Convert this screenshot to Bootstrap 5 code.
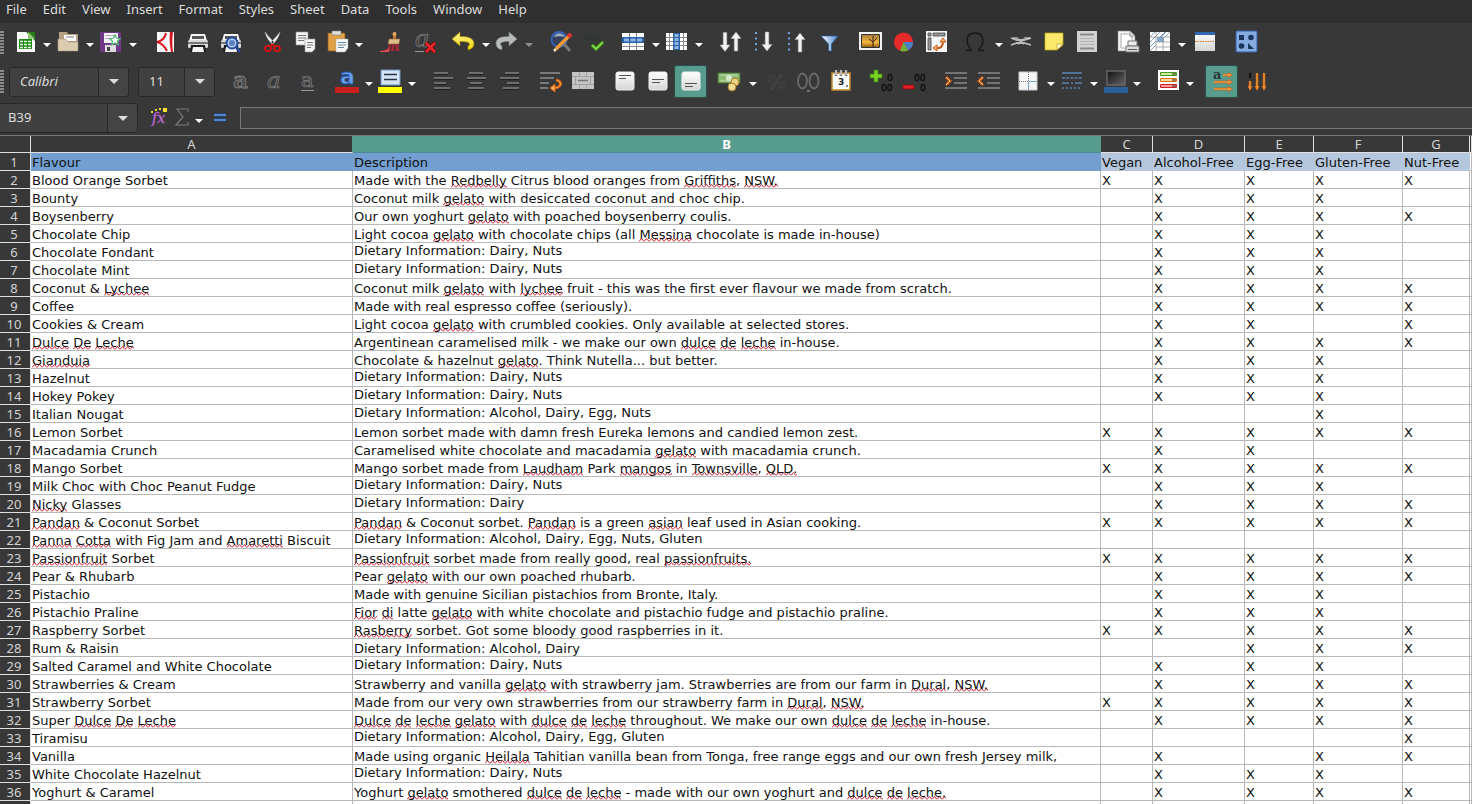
<!DOCTYPE html>
<html lang="en">
<head>
<meta charset="utf-8">
<meta name="viewport" content="width=device-width, initial-scale=1">
<title>Flavours – Calc</title>
<link href="https://cdn.jsdelivr.net/npm/bootstrap@5.3.0/dist/css/bootstrap.min.css" rel="stylesheet">
<style>
:root { --chrome:#383838; --chrome-dark:#2f2f2f; --field:#404040; --edge:#282828; --accent:#589c8d; --ui:"Noto Sans","Open Sans",sans-serif; }
body { background:var(--chrome); color:#dcdcdc; font-family:var(--ui); font-size:13px; }
.menubar { background:var(--chrome-dark); height:23px; padding:0 6px; gap:16px; }
.menubar a { color:#dcdcdc; line-height:19px; text-decoration:none; }
.toolbar { height:39px; padding-left:9px; background-repeat:no-repeat; background-size:4px 24px; background-position:0 center;
  background-image:repeating-linear-gradient(#8a8a8a 0 2px,#383838 2px 3px); }
.tool { width:33px; height:33px; padding:0; border:0; border-radius:3px; display:flex; align-items:center; justify-content:center; flex:none; }
.tool svg { width:24px; height:24px; display:block; overflow:visible; }
.tool.active { background:var(--accent); box-shadow:0 0 0 1px #2c4d46 inset; }
.drop { width:10px; height:33px; padding:5px 0 0; border:0; border-radius:0; display:flex; align-items:center; justify-content:center; flex:none; }
.drop::before, .pick::before { content:""; border:4px solid transparent; border-top-color:#fff; border-bottom:0; }
.drop:disabled { border:0; opacity:.45; }
.pick::before { border-width:5px; border-bottom:0; border-top-color:#dcdcdc; }
.gap-s { width:8px; flex:none; } .gap-m { width:10px; flex:none; }
.combo { height:30px; flex:none; width:auto; flex-wrap:nowrap; }
.combo .form-control { background:var(--field); color:#dcdcdc; border:1px solid var(--edge); border-radius:3px 0 0 3px; font-size:13px; padding:0 10px; min-width:0; flex:1; }
.combo .pick { width:31px; padding:0; background:#444; border:1px solid var(--edge); border-radius:0 3px 3px 0; display:flex; align-items:center; justify-content:center; }
.c-font { width:120px; } .c-size { width:77px; margin:0 9px; } .c-name { width:138px; }
.combo.c-name .form-control { border-left:0; border-radius:0; padding-left:8px; }
.formulabar { height:35px; border-bottom:1px solid #777; }
.formulabar .tool { width:24px; }
.formulabar .tool.equals { margin-left:4px; }
.formula { height:22px; background:var(--field); border:1px solid #777; border-right:0; border-radius:0; color:#dcdcdc; margin-left:8px; padding:0 4px; font-size:13px; min-width:0; }
.workarea { background:#fff; }
.sheet { table-layout:fixed; width:100%; border-collapse:separate; border-spacing:0; margin:0; font-family:"DejaVu Sans",sans-serif; font-size:13px; line-height:15px; }
.sheet td, .sheet th { height:18px; padding:2px 0 0 1px; border:0 solid #b8b8b8; border-width:0 1px 1px 0; color:#111; background:#fff; box-shadow:none; white-space:nowrap; overflow:hidden; vertical-align:top; font-weight:400; }
.sheet thead th, .sheet tbody th { background:var(--chrome); color:#d4d4d4; border-color:#e0e0e0; text-align:center; font-family:var(--ui); }
.sheet tbody th { padding:2px 2px 0 0; }
.sheet thead th { height:17px; padding:0; line-height:16px; }
.sheet thead th.before-current { border-right-color:var(--accent); }
.sheet thead th.current { background:var(--accent); color:#fff; font-weight:700; border-color:var(--accent); border-bottom-color:#4b8a98; }
.sheet td.head-main { background:#729fcf; border-color:#729fcf; }
.sheet td.head-flag { background:#b4c7dc; border-color:#b4c7dc; }
.sheet td.raised { padding-top:0; }
.sheet .typo { background:url("data:image/svg+xml,%3Csvg xmlns='http://www.w3.org/2000/svg' width='5' height='4'%3E%3Cpath d='M0 3.500L2.500 .5L5 3.500' fill='none' stroke='%23d02030'/%3E%3C/svg%3E") left bottom/5px 4px repeat-x; }
.w-row { width:31px; } .w-a { width:322px; } .w-b { width:748px; } .w-c { width:52px; } .w-d { width:92px; } .w-e { width:69px; } .w-f { width:89px; } .w-g { width:67px; }
</style>
</head>
<body class="vh-100 overflow-hidden d-flex flex-column">

<svg width="0" height="0" class="position-absolute" aria-hidden="true">
  <defs>
    <linearGradient id="silver" x1="0" y1="0" x2="0" y2="1"><stop offset="0" stop-color="#fff"/><stop offset="1" stop-color="#d4d4d4"/></linearGradient>
    <linearGradient id="gold" x1="0" y1="0" x2="0" y2="1"><stop offset="0" stop-color="#fff39a"/><stop offset="1" stop-color="#edd400"/></linearGradient>
    <linearGradient id="sky" x1="0" y1="0" x2="1" y2="0"><stop offset="0" stop-color="#fff"/><stop offset="1" stop-color="#4d8bd0"/></linearGradient>
    <linearGradient id="sunset" x1="0" y1="0" x2="0" y2="1"><stop offset="0" stop-color="#a77a3a"/><stop offset=".6" stop-color="#f5b93c"/><stop offset="1" stop-color="#8a5a18"/></linearGradient>
    <linearGradient id="dusk" x1="0" y1="0" x2="1" y2="1"><stop offset="0" stop-color="#111"/><stop offset="1" stop-color="#666"/></linearGradient>
    <g id="arrow-down"><path d="M-1.800 -9h3.600V3.500h3.200L0 10l-5 -6.500h3.200z" fill="#f2f2f2" stroke="#aaa" stroke-width=".5"/></g>
    <g id="printer"><path d="M5 3h14l2 7H3z" fill="#f5f5f5"/><path d="M6 5h12v3H6z" fill="#555"/><rect x="2" y="9" width="20" height="8" rx="1.500" fill="#dadada"/><path d="M2 12h20" stroke="#555" stroke-width="1.500"/><path d="M5 14h14l1 7H4z" fill="#1c1c1c"/><path d="M7 16h10l1 5H6z" fill="#f2f2f2"/></g>
  </defs>
</svg>

<nav class="menubar d-flex flex-shrink-0" aria-label="Main menu">
  <a href="#">File</a><a href="#">Edit</a><a href="#">View</a><a href="#">Insert</a><a href="#">Format</a><a href="#">Styles</a><a href="#">Sheet</a><a href="#">Data</a><a href="#">Tools</a><a href="#">Window</a><a href="#">Help</a>
</nav>

<div class="toolbar d-flex align-items-center flex-shrink-0" role="toolbar" aria-label="Standard">
  <button class="btn tool" aria-label="New"><svg viewBox="0 0 24 24"><path d="M3 1h11l7 7v13H3z" fill="#fafafa"/><path d="M12 1h9v9z" fill="#2c7a1c"/><path d="M14 1v7h7z" fill="#8ecb72"/><rect x="5" y="8" width="13" height="10" fill="#1e8a12"/><path d="M6 10.500h11M6 13.500h11M6 16.500h11" stroke="#e6f6e0" stroke-width="1.600"/><path d="M9.500 9v9M13.500 9v9" stroke="#1e8a12"/></svg></button><button class="btn drop" aria-label="New options"></button>
  <button class="btn tool" aria-label="Open"><svg viewBox="0 0 24 24"><path d="M2 1h8l1 2h10v8H2z" fill="#b5a084"/><path d="M7 4h12v6H7z" fill="#fff"/><path d="M9 6h8" stroke="#777"/><path d="M1 8h8l2 3h10v9H1z" fill="#dccbb0" stroke="#a8937a" stroke-width=".6"/></svg></button><button class="btn drop" aria-label="Open options"></button>
  <button class="btn tool" aria-label="Save"><svg viewBox="0 0 24 24"><rect x="0" y="1" width="21" height="20" rx="1.500" fill="#6f3889"/><rect x="4" y="2" width="14" height="10" fill="#f4f0f6"/><path d="M5 4.500h10M5 7.500h6" stroke="#b9a6c6"/><path d="M5 14h11v7H5z" fill="#ddd"/><path d="M7 16h3v4H7z" fill="#444"/><path d="M15 4l1.600 3.300 3.600.4-2.700 2.500.8 3.600-3.300-1.800-3.300 1.800.8-3.600L9.800 7.700l3.600-.4z" fill="#fff" stroke="#49b868" stroke-width="1.200"/></svg></button><button class="btn drop" aria-label="Save options"></button>
  <span class="gap-m"></span>
  <button class="btn tool" aria-label="Export as PDF"><svg viewBox="0 0 24 24"><path d="M4 1h17v20H4z" fill="#f7f7f7"/><path d="M4 11c5-1 8-4 9-9M4 11c4 1 8 5 10 9" fill="none" stroke="#d8141c" stroke-width="2"/><path d="M17 1h3c-1 7-1 13 0 20h-2c-1-7-2-13-1-20z" fill="#d8141c"/></svg></button>
  <button class="btn tool" aria-label="Print"><svg viewBox="0 0 24 24"><use href="#printer"/></svg></button>
  <button class="btn tool" aria-label="Print preview"><svg viewBox="0 0 24 24"><use href="#printer"/><circle cx="13" cy="12" r="5.500" fill="#b6cdf0" stroke="#264a9c" stroke-width="2"/><circle cx="13" cy="12" r="3" fill="#587fc0"/><path d="M17 16l4 5" stroke="#264a9c" stroke-width="2.500"/></svg></button>
  <span class="gap-s"></span>
  <button class="btn tool" aria-label="Cut"><svg viewBox="0 0 24 24"><path d="M5 1c1 5 4 9 7 12l2-2C11 8 8 5 5 1zM20 1c-1 5-4 9-7 12l-2-2c3-3 6-6 9-10z" fill="#f3f3f3" stroke="#aaa" stroke-width=".5"/><g fill="none" stroke="#dc1010" stroke-width="1.800"><ellipse cx="8" cy="17.500" rx="3" ry="2.600"/><ellipse cx="17" cy="17.500" rx="3" ry="2.600"/><path d="M10 15.500l2.500-2 2.500 2"/></g></svg></button>
  <button class="btn tool" aria-label="Copy"><svg viewBox="0 0 24 24"><g fill="#f5f5f5" stroke="#999" stroke-width=".6"><path d="M3 1h12v13H3z"/><path d="M12 8h10v10l-3 3h-7z"/></g><path d="M5 4.500h8M5 7h8M5 9.500h6M14 11.500h6M14 14h6M14 16.500h4" stroke="#777"/></svg></button>
  <button class="btn tool" aria-label="Paste"><svg viewBox="0 0 24 24"><rect x="2" y="2" width="17" height="18" rx="1" fill="#e0a045" stroke="#8a5c18" stroke-width=".7"/><path d="M6 0h9v4H6z" fill="#ddd" stroke="#888" stroke-width=".6"/><path d="M10 8h12v9l-3 4h-9z" fill="#f7f7f7" stroke="#aaa" stroke-width=".5"/><path d="M12 11.500h8M12 14h8M12 16.500h6" stroke="#6888a8"/></svg></button><button class="btn drop" aria-label="Paste options"></button>
  <span class="gap-m"></span>
  <button class="btn tool" aria-label="Clone formatting"><svg viewBox="0 0 24 24"><path d="M14 2h3v7h-3z" fill="#c97a28"/><circle cx="15.500" cy="3" r="2" fill="#e6a65c"/><path d="M10 8h11l-1 5H9z" fill="#dcbc88" stroke="#80582a" stroke-width=".5"/><path d="M10 13h10c-1 4 0 5 1 7H2c5-1 8-3 8-7z" fill="#9c2c38"/><path d="M1 20c5 0 8-1 10-3l-1 4H1z" fill="#e04a5c"/><path d="M13 14l-2 6M16 14v6" stroke="#33272a"/></svg></button>
  <button class="btn tool" aria-label="Clear formatting"><svg viewBox="0 0 24 24"><text x="3" y="16" font-family="Liberation Serif" font-style="italic" font-size="28" fill="none" stroke="#858585" stroke-width=".7">a</text><path d="M3 20.500h9" stroke="#999"/><path d="M14 12l9 9M23 12l-9 9" stroke="#700" stroke-width="4"/><path d="M14 12l9 9M23 12l-9 9" stroke="#e8262c" stroke-width="2.500"/></svg></button>
  <span class="gap-s"></span>
  <button class="btn tool" aria-label="Undo"><svg viewBox="0 0 24 24"><path d="M-1 8l8-7v4.500c10-.5 14 3 14 7 0 3.500-2 5.500-6 6.500v-4c3-1.500 2-4.800-8-4.500V15z" fill="url(#gold)" stroke="#9a8200" stroke-width=".6"/></svg></button><button class="btn drop" aria-label="Undo history"></button>
  <button class="btn tool" aria-label="Redo"><svg viewBox="0 0 24 24"><path d="M21 8l-8-7v4.500C3 5 0 8.500 0 12.500 0 16 2 18 6 19v-4c-3-1.500-2-4.800 7-4.500V15z" fill="#b8bcbd" stroke="#777" stroke-width=".6"/></svg></button><button class="btn drop" aria-label="Redo history" disabled></button>
  <span class="gap-m"></span>
  <button class="btn tool" aria-label="Find and replace"><svg viewBox="0 0 24 24"><circle cx="10" cy="8.500" r="7.500" fill="#33415a" stroke="#3560b4" stroke-width="2"/><path d="M5 6c2-5 8-5 11 0-4-1-7-1-11 0z" fill="#c8d8f0" opacity=".7"/><path d="M15 13l6 7" stroke="#777" stroke-width="3"/><path d="M7 18L21 4" stroke="#f09a38" stroke-width="3.500"/><path d="M19 6l3-3" stroke="#dc3434" stroke-width="4"/><path d="M5 20l2-2" stroke="#f5e6c0" stroke-width="2.500"/></svg></button>
  <button class="btn tool" aria-label="Spelling"><svg viewBox="0 0 24 24"><text x="1" y="10" font-family="Liberation Sans" font-size="11" fill="#2c3634">Abc</text><path d="M10 14l4 4 7-7" fill="none" stroke="#2b6a12" stroke-width="4"/><path d="M10 14l4 4 7-7" fill="none" stroke="#82d648" stroke-width="2.200"/></svg></button>
  <span class="gap-s"></span>
  <button class="btn tool" aria-label="Row"><svg viewBox="0 0 24 24"><path d="M-1 2h22v17H-1z" fill="#fff"/><path d="M-1 6h22v6H-1z" fill="#2a62a8"/><path d="M1 7.500h5v3H1zM7.500 7.500h5v3h-5zM14 7.500h5v3h-5z" fill="#8fb4e0"/><path d="M-1 15.500h22M6.500 2v4M13.500 2v4M6.500 12v7M13.500 12v7" stroke="#8a8a8a"/></svg></button><button class="btn drop" aria-label="Row options"></button>
  <button class="btn tool" aria-label="Column"><svg viewBox="0 0 24 24"><path d="M0 2h21v17H0z" fill="#fff"/><path d="M7 2h7v17H7z" fill="#2a62a8"/><path d="M8.500 3h4v3h-4zM8.500 7h4v3h-4zM8.500 11h4v3h-4zM8.500 15h4v3h-4z" fill="#8fb4e0"/><path d="M0 6.500h7M0 10.500h7M0 14.500h7M14 6.500h7M14 10.500h7M14 14.500h7M3.500 2v17M17.500 2v17" stroke="#8a8a8a"/></svg></button><button class="btn drop" aria-label="Column options"></button>
  <span class="gap-m"></span>
  <button class="btn tool" aria-label="Sort"><svg viewBox="0 0 24 24"><use href="#arrow-down" x="6" y="10.500"/><use href="#arrow-down" transform="translate(17 11) rotate(180)"/></svg></button>
  <button class="btn tool" aria-label="Sort descending"><svg viewBox="0 0 24 24"><path d="M4 1v20" stroke="#6fa0dc" stroke-width="2" stroke-dasharray="2 3.500"/><use href="#arrow-down" x="15" y="10"/></svg></button>
  <button class="btn tool" aria-label="Sort ascending"><svg viewBox="0 0 24 24"><path d="M4 1v20" stroke="#6fa0dc" stroke-width="2" stroke-dasharray="2 3.500"/><use href="#arrow-down" transform="translate(15 12) rotate(180)"/></svg></button>
  <button class="btn tool" aria-label="AutoFilter"><svg viewBox="0 0 24 24"><path d="M3 5h17l-6.500 8v7h-3v-7z" fill="url(#sky)" stroke="#2a5a9a" stroke-width=".7"/></svg></button>
  <span class="gap-s"></span>
  <button class="btn tool" aria-label="Insert image"><svg viewBox="0 0 24 24"><path d="M0 1h23v18H0z" fill="#f2f2f2"/><path d="M2.500 3.500h18v13h-18z" fill="url(#sunset)" stroke="#333"/><path d="M14 16v-5l-4-3M14 11l4-4M14 10V5" stroke="#33200c" fill="none"/></svg></button>
  <button class="btn tool" aria-label="Insert chart"><svg viewBox="0 0 24 24"><circle cx="11.500" cy="11" r="9.500" fill="#e62a2a"/><path d="M11.500 11H21a9.500 9.500 0 0 1-5 8.400z" fill="#4880c8"/><path d="M11.500 11l4.500 8.400a9.500 9.500 0 0 1-8 .4z" fill="#6cb23c"/></svg></button>
  <button class="btn tool" aria-label="Pivot table"><svg viewBox="0 0 24 24"><path d="M1 0h21v21H1z" fill="#f7f7f7"/><path d="M3 2h3v3H3zM8 2h12v3H8zM3 7h3v12H3z" fill="#999" stroke="#444" stroke-width=".8"/><path d="M11 17c5 1 7-2 7-7" fill="none" stroke="#c65a14" stroke-width="2"/><path d="M8 17l4-3v6zM18 7l3 4h-6z" fill="#fbb46a" stroke="#c65a14"/></svg></button>
  <span class="gap-s"></span>
  <button class="btn tool" aria-label="Special character"><svg viewBox="0 0 24 24"><path d="M0 19.500h5c0-3-4-4-4-9.500 0-5 3-8 8-8s8 3 8 8c0 5.500-4 6.500-4 9.500h5" fill="none" stroke="#181818" stroke-width="1.500"/></svg></button><button class="btn drop" aria-label="Special character options"></button>
  <button class="btn tool" aria-label="Hyperlink"><svg viewBox="0 0 24 24"><path d="M2 7l6 2h7l7-2M2 14l6-2h7l7 2M9 8l6 5M15 8l-6 5" fill="none" stroke="#bdbdbd" stroke-width="1.800"/><path d="M4 7h5M15 7h6" stroke="#eee"/></svg></button>
  <button class="btn tool" aria-label="Comment"><svg viewBox="0 0 24 24"><path d="M3 2h18v12l-6 5H3z" fill="#fae96a" stroke="#c9ae10" stroke-width=".7"/><path d="M21 13h-6v6z" fill="#fffbd4" stroke="#a89210" stroke-width=".6"/></svg></button>
  <button class="btn tool" aria-label="Headers and footers"><svg viewBox="0 0 24 24"><path d="M2 0h20v21H2z" fill="#d2d2d2"/><path d="M5 3.500h14M5 17.500h14" stroke="#8b8b8b" stroke-width="2"/><path d="M5 7.500h14M5 10.500h14M5 13.500h14" stroke="#b2b2b2"/></svg></button>
  <span class="gap-s"></span>
  <button class="btn tool" aria-label="Define print area"><svg viewBox="0 0 24 24"><path d="M2 0h12l5 5v15H2z" fill="#f5f5f5" stroke="#888" stroke-width=".6"/><path d="M5 3h8l3 3v11H5z" fill="#fff" stroke="#aaa"/><path d="M14 0v5h5" fill="#ddd" stroke="#999"/><path d="M12 10h9v5h-9z" fill="#eee" stroke="#777"/><path d="M10 15h13v6H10z" fill="#ddd" stroke="#777"/><path d="M12 18.500h9" stroke="#555"/></svg></button>
  <button class="btn tool" aria-label="Freeze rows and columns"><svg viewBox="0 0 24 24"><path d="M1 1h20v19H1z" fill="#fff"/><path d="M1 6l5-5M1 11L11 1M1 16L16 1M1 20l6-6M12 6l5-5M16 6l5-5" stroke="#6688aa" stroke-width=".8"/><path d="M7 6h14v14H7z" fill="#fff"/><path d="M8 6h7v5H8z" fill="#86a8cf"/><path d="M1 6h20M7 1v19M7 11h14M7 16h14M14 6v14" stroke="#999" stroke-width=".8"/></svg></button><button class="btn drop" aria-label="Freeze options"></button>
  <button class="btn tool" aria-label="Split window"><svg viewBox="0 0 24 24"><path d="M3 1h20v19H3z" fill="url(#silver)"/><path d="M3 1h20v3H3z" fill="#2f68b0"/><path d="M3 10.500h20" stroke="#d67514" stroke-width="1.200" stroke-dasharray="1.500 1"/></svg></button>
  <span class="gap-s"></span>
  <button class="btn tool" aria-label="Show draw functions"><svg viewBox="0 0 24 24"><rect x="3" y="0" width="21" height="21" rx="1" fill="#86abde" stroke="#2e5ea6"/><path d="M6 4h5v5H6zM15 12v6h6z" fill="#18365e"/><circle cx="18" cy="6.500" r="2.800" fill="#18365e"/><circle cx="8.500" cy="15" r="2.800" fill="#18365e"/></svg></button>
</div>

<div class="toolbar d-flex align-items-center flex-shrink-0" role="toolbar" aria-label="Formatting">
  <div class="input-group combo c-font"><input class="form-control fst-italic" type="text" value="Calibri" aria-label="Font name"><button class="btn pick" aria-label="Choose font"></button></div>
  <div class="input-group combo c-size"><input class="form-control" type="text" value="11" aria-label="Font size"><button class="btn pick" aria-label="Choose size"></button></div>
  <button class="btn tool" aria-label="Bold"><svg viewBox="0 0 24 24"><text x="4" y="18" font-family="DejaVu Serif" font-weight="700" font-size="23" fill="#4c4c4c" stroke="#808080" stroke-width=".8">a</text></svg></button>
  <button class="btn tool" aria-label="Italic"><svg viewBox="0 0 24 24"><text x="5" y="18" font-family="DejaVu Serif" font-style="italic" font-size="23" fill="#3c3c3c" stroke="#808080" stroke-width=".7">a</text></svg></button>
  <button class="btn tool" aria-label="Underline"><svg viewBox="0 0 24 24"><text x="6" y="17" font-family="DejaVu Serif" font-size="21" fill="#3c3c3c" stroke="#808080" stroke-width=".7">a</text><path d="M6 20.500h13" stroke="#999"/></svg></button>
  <span class="gap-s"></span>
  <button class="btn tool" aria-label="Font color"><svg viewBox="0 0 24 24"><text x="4" y="14" font-family="DejaVu Sans" font-weight="700" font-size="22" fill="#6aa0e8" stroke="#2454a8" stroke-width=".8">a</text><path d="M-1 17h24v6H-1z" fill="#c9211e"/></svg></button><button class="btn drop" aria-label="Font color options"></button>
  <button class="btn tool" aria-label="Highlighting color"><svg viewBox="0 0 24 24"><path d="M2 0h19v15H2z" fill="#d4e4f8" stroke="#6f93c4"/><path d="M5 4.500h13M5 9.500h13" stroke="#26323c" stroke-width="1.600"/><path d="M-1 17h24v6H-1z" fill="#ff0"/></svg></button><button class="btn drop" aria-label="Highlighting options"></button>
  <span class="gap-m"></span>
  <button class="btn tool" aria-label="Align left"><svg viewBox="0 0 24 24"><path d="M2 3h14M2 8h19M2 13h12M2 18h16" stroke="#808080" stroke-width="1.600"/><path d="M2 4.500h14M2 9.500h19M2 14.500h12M2 19.500h16" stroke="#202020"/></svg></button>
  <button class="btn tool" aria-label="Center horizontally"><svg viewBox="0 0 24 24"><path d="M4 3h14M2 8h19M5 13h12M3 18h16" stroke="#808080" stroke-width="1.600"/><path d="M4 4.500h14M2 9.500h19M5 14.500h12M3 19.500h16" stroke="#202020"/></svg></button>
  <button class="btn tool" aria-label="Align right"><svg viewBox="0 0 24 24"><path d="M7 3h14M2 8h19M9 13h12M5 18h16" stroke="#808080" stroke-width="1.600"/><path d="M7 4.500h14M2 9.500h19M9 14.500h12M5 19.500h16" stroke="#202020"/></svg></button>
  <span class="gap-s"></span>
  <button class="btn tool" aria-label="Wrap text"><svg viewBox="0 0 24 24"><path d="M1 3h20M1 8h14M1 13h9M1 18h8" stroke="#909090" stroke-width="1.600"/><path d="M17 10c6 1 6 7-1 8" fill="none" stroke="#d65a0c" stroke-width="3"/><path d="M17 10c6 1 6 7-1 8" fill="none" stroke="#ffb25a"/><path d="M16 14v8l-5-4z" fill="#ffb25a" stroke="#d65a0c"/></svg></button>
  <button class="btn tool" aria-label="Merge and center cells"><svg viewBox="0 0 24 24"><path d="M0 2h22v17H0z" fill="#c4c4c4"/><path d="M0 6.500h22M0 14.500h22M7.500 2v4M14.500 2v4M7.500 15v4M14.500 15v4M3.500 7v7M18.500 7v7" stroke="#a2a2a2"/><path d="M6 10.500h10" stroke="#777" stroke-width="1.500"/></svg></button>
  <span class="gap-s"></span>
  <button class="btn tool" aria-label="Align top"><svg viewBox="0 0 24 24"><rect x="3" y="2" width="18" height="18" rx="2" fill="url(#silver)" stroke="#eee"/><path d="M6 5.500h12M6 8.500h7" stroke="#555"/></svg></button>
  <button class="btn tool" aria-label="Center vertically"><svg viewBox="0 0 24 24"><rect x="3" y="2" width="18" height="18" rx="2" fill="url(#silver)" stroke="#eee"/><path d="M6 9.500h12M6 12.500h8" stroke="#555"/></svg></button>
  <button class="btn tool active" aria-label="Align bottom" aria-pressed="true"><svg viewBox="0 0 24 24"><rect x="3" y="2" width="18" height="18" rx="2" fill="url(#silver)" stroke="#eee"/><path d="M6 13.500h12M6 16.500h8" stroke="#555"/></svg></button>
  <span class="gap-s"></span>
  <button class="btn tool" aria-label="Format as currency"><svg viewBox="0 0 24 24"><path d="M-2 3h22v10H-2z" fill="#8cba76" stroke="#41702e"/><path d="M0 5h18M0 11h18" stroke="#c2dfb2"/><circle cx="9" cy="8" r="3" fill="#d6ebcb"/><circle cx="15" cy="12" r="4" fill="#edd285" stroke="#a67c20"/><circle cx="12" cy="17" r="4" fill="#f0da96" stroke="#a67c20"/></svg></button><button class="btn drop" aria-label="Currency options"></button>
  <button class="btn tool" aria-label="Format as percent"><svg viewBox="0 0 24 24"><text x="4" y="19" font-family="DejaVu Sans" font-size="20" fill="#2a2a2a" stroke="#505050" stroke-width=".6">%</text></svg></button>
  <button class="btn tool" aria-label="Format as number"><svg viewBox="0 0 24 24"><g fill="none" stroke="#6a6a6a" stroke-width="1.800"><ellipse cx="6.500" cy="11" rx="4.500" ry="7.500"/><ellipse cx="18" cy="11" rx="4.500" ry="7.500"/></g><path d="M11 20h3v2h-3z" fill="#777"/></svg></button>
  <button class="btn tool" aria-label="Format as date"><svg viewBox="0 0 24 24"><path d="M3 3h18v17H3z" fill="#fafafa" stroke="#c08c2c" stroke-width="1.500"/><path d="M7 0v6M12 0v6M17 0v6" stroke="#777" stroke-width="2.500"/><path d="M7 0v5M12 0v5M17 0v5" stroke="#fff"/><text x="9" y="15" font-family="DejaVu Sans" font-weight="700" font-size="9" fill="#222">3</text><path d="M17 15h2v2h-2z" fill="#888"/></svg></button>
  <span class="gap-s"></span>
  <button class="btn tool" aria-label="Add decimal place"><svg viewBox="0 0 24 24"><path d="M4 0h4v4h4v4H8v4H4V8H0V4h4z" fill="#78d224" stroke="#347808" stroke-width=".7"/><g font-family="DejaVu Sans" font-size="9" fill="#0c0c0c" stroke="#0c0c0c" stroke-width=".4"><text x="17" y="11">0</text><text x="11" y="21">00</text></g></svg></button>
  <button class="btn tool" aria-label="Delete decimal place"><svg viewBox="0 0 24 24"><path d="M0 15h11v4H0z" fill="#e41d28" stroke="#8a0c12" stroke-width=".7"/><g font-family="DejaVu Sans" font-size="9" fill="#0c0c0c" stroke="#0c0c0c" stroke-width=".4"><text x="11" y="11">00</text><text x="17" y="21">0</text></g></svg></button>
  <span class="gap-s"></span>
  <button class="btn tool" aria-label="Increase indent"><svg viewBox="0 0 24 24"><path d="M1 3h22M10 8h13M10 13h13M1 18h22" stroke="#888" stroke-width="1.600"/><path d="M2 7l4 4-4 4" fill="none" stroke="#c65a14" stroke-width="3"/><path d="M2 7l4 4-4 4" fill="none" stroke="#ffc078"/></svg></button>
  <button class="btn tool" aria-label="Decrease indent"><svg viewBox="0 0 24 24"><path d="M1 3h22M10 8h13M10 13h13M1 18h22" stroke="#888" stroke-width="1.600"/><path d="M6 7l-4 4 4 4" fill="none" stroke="#c65a14" stroke-width="3"/><path d="M6 7l-4 4 4 4" fill="none" stroke="#ffc078"/></svg></button>
  <span class="gap-s"></span>
  <button class="btn tool" aria-label="Borders"><svg viewBox="0 0 24 24"><path d="M1 2h18v18H1z" fill="#f5f5f5" stroke="#ccc"/><path d="M10.500 2v18M1 11.500h18" stroke="#777" stroke-dasharray="1 1"/><path d="M10.500 12v8M11 11.500h8" stroke="#7ba4cc"/></svg></button><button class="btn drop" aria-label="Border options"></button>
  <button class="btn tool" aria-label="Border style"><svg viewBox="0 0 24 24" fill="none" stroke="#5a82ac" stroke-width="1.600"><path d="M1 3h20"/><path d="M1 8h20" stroke-dasharray="3 1.200"/><path d="M1 13h20" stroke-dasharray="7 2 2 2"/><path d="M1 18h20" stroke-dasharray="2 2"/></svg></button><button class="btn drop" aria-label="Border style options"></button>
  <button class="btn tool" aria-label="Border color"><svg viewBox="0 0 24 24"><path d="M3 1h18v14H3z" fill="url(#dusk)" stroke="#666" stroke-width="1.500"/><path d="M0 17h24v6H0z" fill="#2a6099"/></svg></button><button class="btn drop" aria-label="Border color options"></button>
  <span class="gap-m"></span>
  <button class="btn tool" aria-label="Conditional formatting"><svg viewBox="0 0 24 24"><path d="M1 0h21v20H1z" fill="#fdfdfd"/><path d="M3.500 2.500h16v3h-16z" fill="#c5efa5" stroke="#4c9618"/><path d="M3.500 8.500h16v3h-16z" fill="#ffd79a" stroke="#d67514"/><path d="M3.500 14.500h16v3h-16z" fill="#ffa0a0" stroke="#cc2020"/><path d="M15 4h4M15 10h4M15 16h4" stroke="#222"/></svg></button><button class="btn drop" aria-label="Conditional formatting options"></button>
  <span class="gap-m"></span>
  <button class="btn tool active" aria-label="Text direction left to right" aria-pressed="true"><svg viewBox="0 0 24 24"><text x="3" y="9" font-family="DejaVu Serif" font-weight="700" font-size="13" fill="#263838">a</text><path d="M13 5h6M4 12h15M4 19h15" stroke="#c0500c" stroke-width="2.600"/><path d="M18 2l5 3-5 3zM18 9l5 3-5 3zM18 16l5 3-5 3z" fill="#d66a1c"/><path d="M13 5h8M4 12h17M4 19h17" stroke="#ffc45a"/></svg></button>
  <button class="btn tool" aria-label="Text direction top to bottom"><svg viewBox="0 0 24 24"><path d="M7 3v5" stroke="#111" stroke-width="2"/><path d="M7 11v6M14 3v14M21 3v14" stroke="#c0500c" stroke-width="2.600"/><path d="M4.500 16h5L7 21zM11.500 16h5L14 21zM18.500 16h5L21 21z" fill="#d66a1c"/><path d="M7 11v8M14 3v16M21 3v16" stroke="#ffb84a"/></svg></button>
</div>

<div class="formulabar d-flex align-items-center flex-shrink-0">
  <div class="input-group combo c-name"><input class="form-control" type="text" value="B39" aria-label="Name box"><button class="btn pick" aria-label="Choose named range"></button></div>
  <span class="gap-s"></span>
  <button class="btn tool" aria-label="Function wizard"><svg viewBox="0 0 24 24"><text x="6" y="17" font-family="DejaVu Serif" font-style="italic" font-size="14" fill="#d889e4" stroke="#9a4fae" stroke-width=".5">fx</text><path d="M5 5h2v2H5zM9 3h2v2H9zM13 2h2v2h-2zM17 2h4v4h-4z" fill="#f5e02c"/></svg></button>
  <button class="btn tool" aria-label="Select function"><svg viewBox="0 0 24 24"><path d="M18 6V3H7l6 8-7 8h12v-3" fill="none" stroke="#7a7a7a" stroke-width="1.200"/></svg></button><button class="btn drop" aria-label="Function options"></button>
  <button class="btn tool equals" aria-label="Formula"><svg viewBox="0 0 24 24"><path d="M6 9h12M6 14h12" stroke="#18437c" stroke-width="3.500"/><path d="M6 9h12M6 14h12" stroke="#6a9fe4" stroke-width="1.600"/></svg></button>
  <input class="form-control formula flex-grow-1" type="text" aria-label="Input line">
</div>

<main class="workarea flex-grow-1 overflow-hidden">
  <table class="table sheet" aria-label="Gelato flavours">
    <colgroup><col class="w-row"><col class="w-a"><col class="w-b"><col class="w-c"><col class="w-d"><col class="w-e"><col class="w-f"><col class="w-g"><col></colgroup>
    <thead><tr><th></th><th scope="col" class="before-current">A</th><th scope="col" class="current">B</th><th scope="col">C</th><th scope="col">D</th><th scope="col">E</th><th scope="col">F</th><th scope="col">G</th><th></th></tr></thead>
    <tbody id="rows"></tbody>
  </table>
</main>

<script src="https://cdn.jsdelivr.net/npm/bootstrap@5.3.0/dist/js/bootstrap.bundle.min.js"></script>
<script>
// Each record: flavour | description | dietary columns marked with an X.
// [word] marks a spelling mistake; a leading ^ marks a top-shifted description.
const records = `Blood Orange Sorbet|Made with the [Redbelly] Citrus blood oranges from [Griffiths], [NSW.]|CDEFG
Bounty|Coconut milk [gelato] with desiccated coconut and choc chip.|DEF
Boysenberry|Our own yoghurt [gelato] with poached boysenberry coulis.|DEFG
Chocolate Chip|Light cocoa [gelato] with chocolate chips (all [Messina] chocolate is made in-house)|DEF
Chocolate Fondant|^Dietary Information: Dairy, Nuts|DEF
Chocolate Mint|^Dietary Information: Dairy, Nuts|DEF
Coconut & [Lychee]|Coconut milk [gelato] with [lychee] fruit - this was the first ever flavour we made from scratch.|DEFG
Coffee|Made with real espresso coffee (seriously).|DEFG
Cookies & Cream|Light cocoa [gelato] with crumbled cookies. Only available at selected stores.|DEG
[Dulce] [De] [Leche]|Argentinean caramelised milk - we make our own [dulce] [de] [leche] in-house.|DEFG
[Gianduia]|Chocolate & hazelnut [gelato]. Think Nutella... but better.|DEF
Hazelnut|^Dietary Information: Dairy, Nuts|DEF
Hokey Pokey|^Dietary Information: Dairy, Nuts|DEF
Italian Nougat|^Dietary Information: Alcohol, Dairy, Egg, Nuts|F
Lemon Sorbet|Lemon sorbet made with damn fresh Eureka lemons and candied lemon zest.|CDEFG
Macadamia Crunch|Caramelised white chocolate and macadamia [gelato] with macadamia crunch.|DE
Mango Sorbet|Mango sorbet made from [Laudham] Park [mangos] in [Townsville], [QLD.]|CDEFG
Milk Choc with Choc Peanut Fudge|^Dietary Information: Dairy, Nuts|DEF
[Nicky] Glasses|^Dietary Information: Dairy|DEFG
[Pandan] & Coconut Sorbet|[Pandan] & Coconut sorbet. [Pandan] is a green [asian] leaf used in Asian cooking.|CDEFG
[Panna] [Cotta] with Fig Jam and [Amaretti] Biscuit|^Dietary Information: Alcohol, Dairy, Egg, Nuts, Gluten|
[Passionfruit] Sorbet|[Passionfruit] sorbet made from really good, real [passionfruits.]|CDEFG
Pear & Rhubarb|Pear [gelato] with our own poached rhubarb.|DEFG
Pistachio|Made with genuine Sicilian pistachios from Bronte, Italy.|DEF
Pistachio Praline|[Fior] [di] latte [gelato] with white chocolate and pistachio fudge and pistachio praline.|DEF
Raspberry Sorbet|[Rasberry] sorbet. Got some bloody good raspberries in it.|CDEFG
Rum & Raisin|Dietary Information: Alcohol, Dairy|EFG
Salted Caramel and White Chocolate|^Dietary Information: Dairy, Nuts|DEF
Strawberries & Cream|Strawberry and vanilla [gelato] with strawberry jam. Strawberries are from our farm in [Dural], [NSW.]|DEFG
Strawberry Sorbet|Made from our very own strawberries from our strawberry farm in [Dural], [NSW.]|CDEFG
Super [Dulce] [De] [Leche]|[Dulce] [de] [leche] [gelato] with [dulce] [de] [leche] throughout. We make our own [dulce] [de] [leche] in-house.|DEFG
Tiramisu|^Dietary Information: Alcohol, Dairy, Egg, Gluten|G
Vanilla|Made using organic [Heilala] Tahitian vanilla bean from Tonga, free range eggs and our own fresh Jersey milk,|DFG
White Chocolate Hazelnut|^Dietary Information: Dairy, Nuts|DEF
Yoghurt & Caramel|Yoghurt [gelato] smothered [dulce] [de] [leche] - made with our own yoghurt and [dulce] [de] [leche.]|DEFG
||`.split("\n").map(line => line.split("|"));

const markup = text => text.replace(/&/g, "&amp;").replace(/\[(.+?)\]/g, '<span class="typo">$1</span>');
const titles = ["Flavour", "Description", "Vegan", "Alcohol-Free", "Egg-Free", "Gluten-Free", "Nut-Free"];
let html = '<tr><th scope="row">1</th>' + titles.map((t, i) => `<td class="${i < 2 ? "head-main" : "head-flag"}">${t}</td>`).join("") + "<td></td></tr>";
records.forEach(([name, text, flags], i) => {
  const raised = text.startsWith("^");
  html += `<tr><th scope="row">${name ? i + 2 : ""}</th><td>${markup(name)}</td><td${raised ? ' class="raised"' : ""}>${markup(text.replace("^", ""))}</td>`
    + [..."CDEFG"].map(c => `<td>${flags.includes(c) ? "X" : ""}</td>`).join("") + "<td></td></tr>";
});
document.getElementById("rows").innerHTML = html;
</script>
</body>
</html>
